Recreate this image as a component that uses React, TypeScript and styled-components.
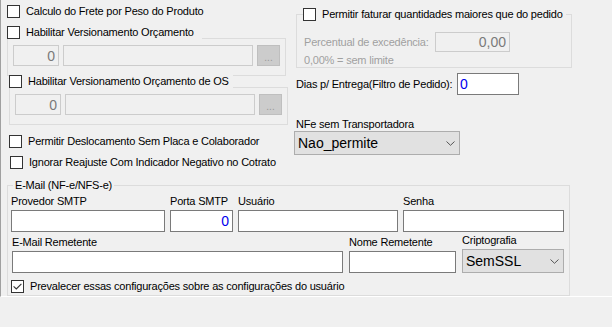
import styled, { createGlobalStyle } from "styled-components";

const GlobalStyle = createGlobalStyle`
  html, body {
    margin: 0;
    padding: 0;
    background: #f0f0f0;
  }
  body {
    font-family: "Liberation Sans", Arial, sans-serif;
    font-size: 11px;
    letter-spacing: -0.2px;
    color: #000;
  }
`;

const Screen = styled.div`
  width: 612px;
  height: 327px;
  overflow: hidden;
  background: #f0f0f0;
`;

const Panel = styled.div`
  height: 297px;
  box-sizing: border-box;
  border-left: 1px solid #a0a0a0;
  border-bottom: 1px solid #ffffff;
`;

const Top = styled.div`
  display: flex;
`;

const LeftCol = styled.div`
  width: 293px;
  box-sizing: border-box;
  padding: 5px 0 0 6px;
  display: flex;
  flex-direction: column;
  align-items: flex-start;
`;

const RightCol = styled.div`
  flex: 1;
  padding-top: 8px;
  display: flex;
  flex-direction: column;
  align-items: flex-start;
`;

const CheckRow = styled.label<{ $indent?: number; $top?: number; $pad?: number }>`
  display: flex;
  align-items: center;
  gap: 6px;
  height: 13px;
  line-height: 13px;
  margin-left: ${(p) => p.$indent ?? 0}px;
  margin-top: ${(p) => p.$top ?? 0}px;
  padding-right: ${(p) => p.$pad ?? 0}px;
  white-space: nowrap;
  background: #f0f0f0;
`;

const Box = styled.span`
  width: 13px;
  height: 13px;
  box-sizing: border-box;
  border: 1px solid #333333;
  background: #ffffff;
  flex: none;
  display: flex;
  align-items: center;
  justify-content: center;
`;

const VGroup = styled.div<{ $indent: number; $top: number }>`
  width: 279px;
  margin-left: ${(p) => p.$indent}px;
  margin-top: ${(p) => p.$top}px;
`;

const VHead = styled.div`
  display: flex;
  align-items: flex-end;
  height: 13px;
`;

const VRule = styled.div`
  flex: 1;
  border-bottom: 1px solid #dcdcdc;
  border-right: 1px solid #dcdcdc;
`;

const VBody = styled.div`
  display: flex;
  gap: 4px;
  padding: 6px 5px 9px;
  border: 1px solid #dcdcdc;
  border-top: 0;
`;

const Field = styled.input<{ $w: number; $h?: number; $right?: boolean }>`
  width: ${(p) => p.$w}px;
  height: ${(p) => p.$h ?? 22}px;
  box-sizing: border-box;
  margin: 0;
  padding: 0 3px 0 2px;
  border: 1px solid #7a7a7a;
  border-radius: 0;
  background: #ffffff;
  font-family: "Liberation Sans", Arial, sans-serif;
  font-size: 14px;
  color: #0000ee;
  text-align: ${(p) => (p.$right ? "right" : "left")};
  outline: none;
  flex: none;

  &:disabled {
    background: #f0f0f0;
    border-color: #cccccc;
    color: #7a7a7a;
    -webkit-text-fill-color: #7a7a7a;
  }
`;

const DotsButton = styled.button`
  width: 23px;
  height: 21px;
  box-sizing: border-box;
  margin: 0;
  padding: 3px 0 0;
  border: 1px solid #bfbfbf;
  border-radius: 0;
  background: #cccccc;
  color: #9a9a9a;
  font-family: "Liberation Sans", Arial, sans-serif;
  font-size: 10px;
  flex: none;
`;

const FatGroup = styled.fieldset`
  width: 276px;
  box-sizing: border-box;
  margin: 0 0 0 2px;
  padding: 0 6px 0 7px;
  border: 1px solid #dcdcdc;
  min-inline-size: 0;
`;

const FatLegend = styled.legend`
  padding: 0 3px 0 0;
  margin-left: -1px;
`;

const ExcRow = styled.div`
  display: flex;
  align-items: center;
  margin-top: 11px;
`;

const GrayText = styled.span<{ $w?: number }>`
  color: #a0a0a0;
  line-height: 14px;
  width: ${(p) => (p.$w ? `${p.$w}px` : "auto")};
  flex: none;
  white-space: nowrap;
`;

const Hint = styled.div`
  color: #a0a0a0;
  line-height: 14px;
  margin-top: 1px;
`;

const InlineRow = styled.div`
  display: flex;
  align-items: center;
  margin: 5px 0 0 2px;
`;

const InlineLabel = styled.span<{ $w: number }>`
  width: ${(p) => p.$w}px;
  flex: none;
  line-height: 14px;
  white-space: nowrap;
`;

const Caption = styled.div<{ $top?: number; $indent?: number }>`
  line-height: 14px;
  margin-top: ${(p) => p.$top ?? 0}px;
  margin-left: ${(p) => p.$indent ?? 0}px;
  white-space: nowrap;
`;

const Combo = styled.div<{ $w: number }>`
  width: ${(p) => p.$w}px;
  height: 24px;
  box-sizing: border-box;
  display: flex;
  align-items: center;
  justify-content: space-between;
  padding: 0 4px 0 3px;
  border: 1px solid #adadad;
  background: #e1e1e1;
  font-size: 14px;
  letter-spacing: 0;
  color: #000;
  flex: none;
`;

const MailGroup = styled.fieldset`
  width: 563px;
  box-sizing: border-box;
  margin: 9px 0 0 6px;
  padding: 2px 5px 2px 3px;
  border: 1px solid #dcdcdc;
  min-inline-size: 0;
`;

const MailLegend = styled.legend`
  padding: 0 2px;
  margin-left: 2px;
  line-height: 14px;
`;

const FieldRow = styled.div<{ $top?: number; $indent?: number; $gap: number }>`
  display: flex;
  align-items: flex-end;
  gap: ${(p) => p.$gap}px;
  margin-top: ${(p) => p.$top ?? 0}px;
  margin-left: ${(p) => p.$indent ?? 0}px;
`;

const FieldCol = styled.div`
  display: flex;
  flex-direction: column;
`;

const FieldLabel = styled.span`
  line-height: 14px;
  margin-bottom: 2px;
  white-space: nowrap;
`;

function Check({ checked }: { checked?: boolean }) {
  return (
    <Box>
      {checked && (
        <svg width="9" height="7" viewBox="0 0 9 7">
          <polyline points="0.6,3.4 3.3,6 8.4,0.8" fill="none" stroke="#333333" strokeWidth="1.1" />
        </svg>
      )}
    </Box>
  );
}

function Chevron() {
  return (
    <svg width="9" height="5" viewBox="0 0 9 5">
      <polyline points="0.5,0.5 4.5,4.3 8.5,0.5" fill="none" stroke="#555555" strokeWidth="1" />
    </svg>
  );
}

function VersionGroup({ label, indent, top, pad }: { label: string; indent: number; top: number; pad: number }) {
  return (
    <VGroup $indent={indent} $top={top}>
      <VHead>
        <CheckRow $pad={pad}>
          <Check />
          {label}
        </CheckRow>
        <VRule />
      </VHead>
      <VBody>
        <Field $w={46} $h={21} $right disabled value="0" readOnly />
        <Field $w={190} $h={21} disabled value="" readOnly />
        <DotsButton disabled>...</DotsButton>
      </VBody>
    </VGroup>
  );
}

export default function App() {
  return (
    <Screen>
      <GlobalStyle />
      <Panel>
        <Top>
          <LeftCol>
            <CheckRow>
              <Check />
              Calculo do Frete por Peso do Produto
            </CheckRow>
            <VersionGroup label="Habilitar Versionamento Orçamento" indent={0} top={8} pad={8} />
            <VersionGroup label="Habilitar Versionamento Orçamento de OS" indent={2} top={-1} pad={4} />
            <CheckRow $indent={2} $top={10}>
              <Check />
              Permitir Deslocamento Sem Placa e Colaborador
            </CheckRow>
            <CheckRow $indent={3} $top={8}>
              <Check />
              Ignorar Reajuste Com Indicador Negativo no Cotrato
            </CheckRow>
          </LeftCol>

          <RightCol>
            <FatGroup>
              <FatLegend>
                <CheckRow>
                  <Check />
                  Permitir faturar quantidades maiores que do pedido
                </CheckRow>
              </FatLegend>
              <ExcRow>
                <GrayText $w={131}>Percentual de excedência:</GrayText>
                <Field $w={75} $h={20} $right disabled value="0,00" readOnly />
              </ExcRow>
              <Hint>0,00% = sem limite</Hint>
            </FatGroup>

            <InlineRow>
              <InlineLabel $w={161}>Dias p/ Entrega(Filtro de Pedido):</InlineLabel>
              <Field $w={62} value="0" readOnly />
            </InlineRow>

            <Caption $top={22} $indent={2}>NFe sem Transportadora</Caption>
            <Combo $w={166}>
              <span>Nao_permite</span>
              <Chevron />
            </Combo>
          </RightCol>
        </Top>

        <MailGroup>
          <MailLegend>E-Mail (NF-e/NFS-e)</MailLegend>
          <FieldRow $gap={5}>
            <FieldCol>
              <FieldLabel>Provedor SMTP</FieldLabel>
              <Field $w={154} value="" readOnly />
            </FieldCol>
            <FieldCol>
              <FieldLabel>Porta SMTP</FieldLabel>
              <Field $w={63} $right value="0" readOnly />
            </FieldCol>
            <FieldCol>
              <FieldLabel>Usuário</FieldLabel>
              <Field $w={160} value="" readOnly />
            </FieldCol>
            <FieldCol>
              <FieldLabel>Senha</FieldLabel>
              <Field $w={161} value="" readOnly />
            </FieldCol>
          </FieldRow>
          <FieldRow $gap={6} $top={1} $indent={1}>
            <FieldCol>
              <FieldLabel>E-Mail Remetente</FieldLabel>
              <Field $w={331} value="" readOnly />
            </FieldCol>
            <FieldCol>
              <FieldLabel>Nome Remetente</FieldLabel>
              <Field $w={107} value="" readOnly />
            </FieldCol>
            <FieldCol>
              <FieldLabel>Criptografia</FieldLabel>
              <Combo $w={102}>
                <span>SemSSL</span>
                <Chevron />
              </Combo>
            </FieldCol>
          </FieldRow>
          <CheckRow $top={7}>
            <Check checked />
            Prevalecer essas configurações sobre as configurações do usuário
          </CheckRow>
        </MailGroup>
      </Panel>
    </Screen>
  );
}
